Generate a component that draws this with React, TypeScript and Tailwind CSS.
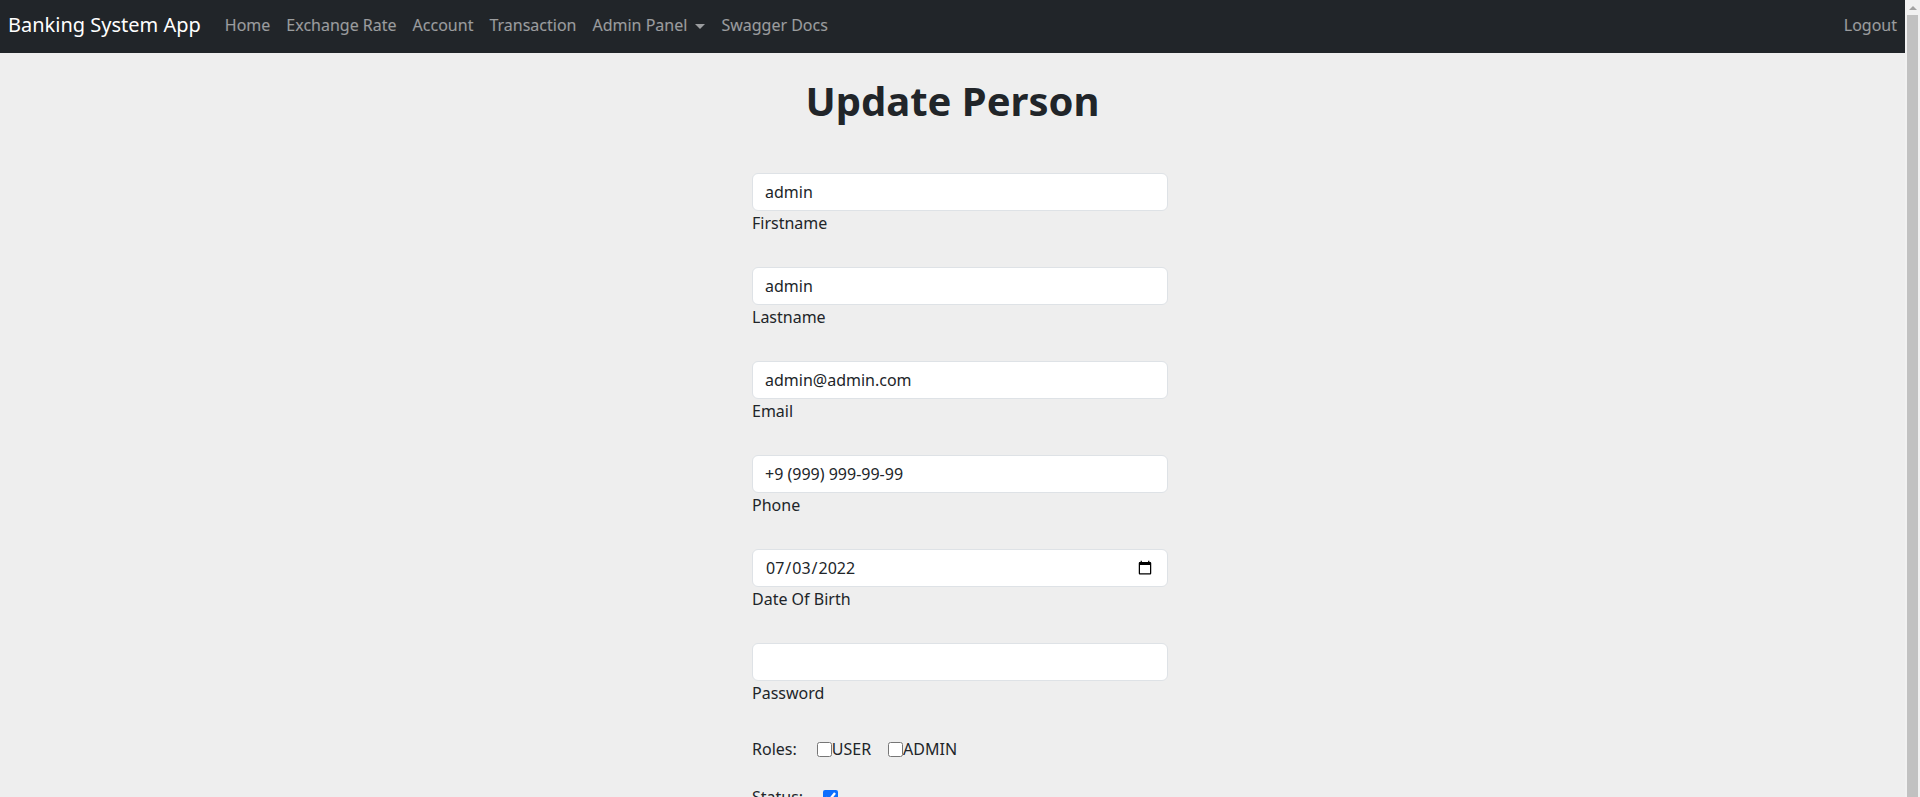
import { useState } from "react";

type Field = {
  name: string;
  label: string;
  type: string;
  value: string;
};

const fields: Field[] = [
  { name: "firstname", label: "Firstname", type: "text", value: "admin" },
  { name: "lastname", label: "Lastname", type: "text", value: "admin" },
  { name: "email", label: "Email", type: "email", value: "admin@admin.com" },
  { name: "phone", label: "Phone", type: "text", value: "+9 (999) 999-99-99" },
  { name: "dateOfBirth", label: "Date Of Birth", type: "date", value: "2022-07-03" },
  { name: "password", label: "Password", type: "password", value: "" },
];

const navLinks = ["Home", "Exchange Rate", "Account", "Transaction"];

export default function App() {
  const [form, setForm] = useState<Record<string, string>>(
    Object.fromEntries(fields.map((f) => [f.name, f.value]))
  );
  const [roles, setRoles] = useState({ USER: false, ADMIN: false });
  const [status, setStatus] = useState(true);

  const handleChange = (e: React.ChangeEvent<HTMLInputElement>) => {
    setForm({ ...form, [e.target.name]: e.target.value });
  };

  return (
    <div className="h-screen flex overflow-hidden font-['Noto_Sans',sans-serif] text-[#212529]">
      <div className="flex-1 bg-[#eeeeee]">
        <nav className="h-[53px] bg-[#212529] flex items-center pl-2 pb-[3px]">
          <a href="#" className="text-[20px] leading-[30px] text-white mr-4">
            Banking System App
          </a>
          <ul className="flex items-center text-[16px] leading-6">
            {navLinks.map((link) => (
              <li key={link}>
                <a href="#" className="px-2 text-white/55">
                  {link}
                </a>
              </li>
            ))}
            <li>
              <a href="#" className="px-2 text-white/55 flex items-center">
                Admin Panel
                <span className="ml-2 mt-[2px] w-0 h-0 border-t-[5px] border-t-white/55 border-x-[5px] border-x-transparent" />
              </a>
            </li>
            <li>
              <a href="#" className="px-2 text-white/55">
                Swagger Docs
              </a>
            </li>
          </ul>
          <a href="#" className="ml-auto px-2 text-[16px] leading-6 text-white/55">
            Logout
          </a>
        </nav>

        <h1 className="text-[40px] leading-[48px] font-bold text-center mt-[24px] mb-12">
          Update Person
        </h1>

        <form
          onSubmit={(e) => e.preventDefault()}
          className="ml-[752px] w-[416px] pb-10 text-[16px] leading-6"
        >
          {fields.map((f) => (
            <div key={f.name} className="mb-8">
              <input
                type={f.type}
                name={f.name}
                value={form[f.name]}
                onChange={handleChange}
                className="block w-full h-[38px] bg-white border border-[#dee2e6] rounded-[6px] px-3 text-[#212529] focus:outline-none"
              />
              <label className="block">{f.label}</label>
            </div>
          ))}

          <div className="flex items-center mb-6">
            <span className="mr-5">Roles:</span>
            <label className="flex items-center mr-[17px]">
              <input
                type="checkbox"
                checked={roles.USER}
                onChange={(e) => setRoles({ ...roles, USER: e.target.checked })}
                className="m-0 w-[15px] h-[15px]"
              />
              USER
            </label>
            <label className="flex items-center">
              <input
                type="checkbox"
                checked={roles.ADMIN}
                onChange={(e) => setRoles({ ...roles, ADMIN: e.target.checked })}
                className="m-0 w-[15px] h-[15px]"
              />
              ADMIN
            </label>
          </div>

          <div className="flex items-center mb-6">
            <span className="mr-5">Status:</span>
            <input
              type="checkbox"
              checked={status}
              onChange={(e) => setStatus(e.target.checked)}
              className="m-0 w-[15px] h-[15px] accent-[#0d6efd]"
            />
          </div>

          <button
            type="submit"
            className="bg-[#0d6efd] text-white rounded-[6px] px-3 py-[6px]"
          >
            Update
          </button>
        </form>
      </div>

      {/* scrollbar */}
      <div className="w-[15px] bg-[#f1f1f1] flex flex-col items-center">
        <div className="h-[15px] flex items-center justify-center">
          <span className="w-0 h-0 border-b-[4px] border-b-[#a3a3a3] border-x-[4px] border-x-transparent" />
        </div>
        <div className="w-[11px] flex-1 bg-[#c1c1c1]" />
      </div>
    </div>
  );
}
